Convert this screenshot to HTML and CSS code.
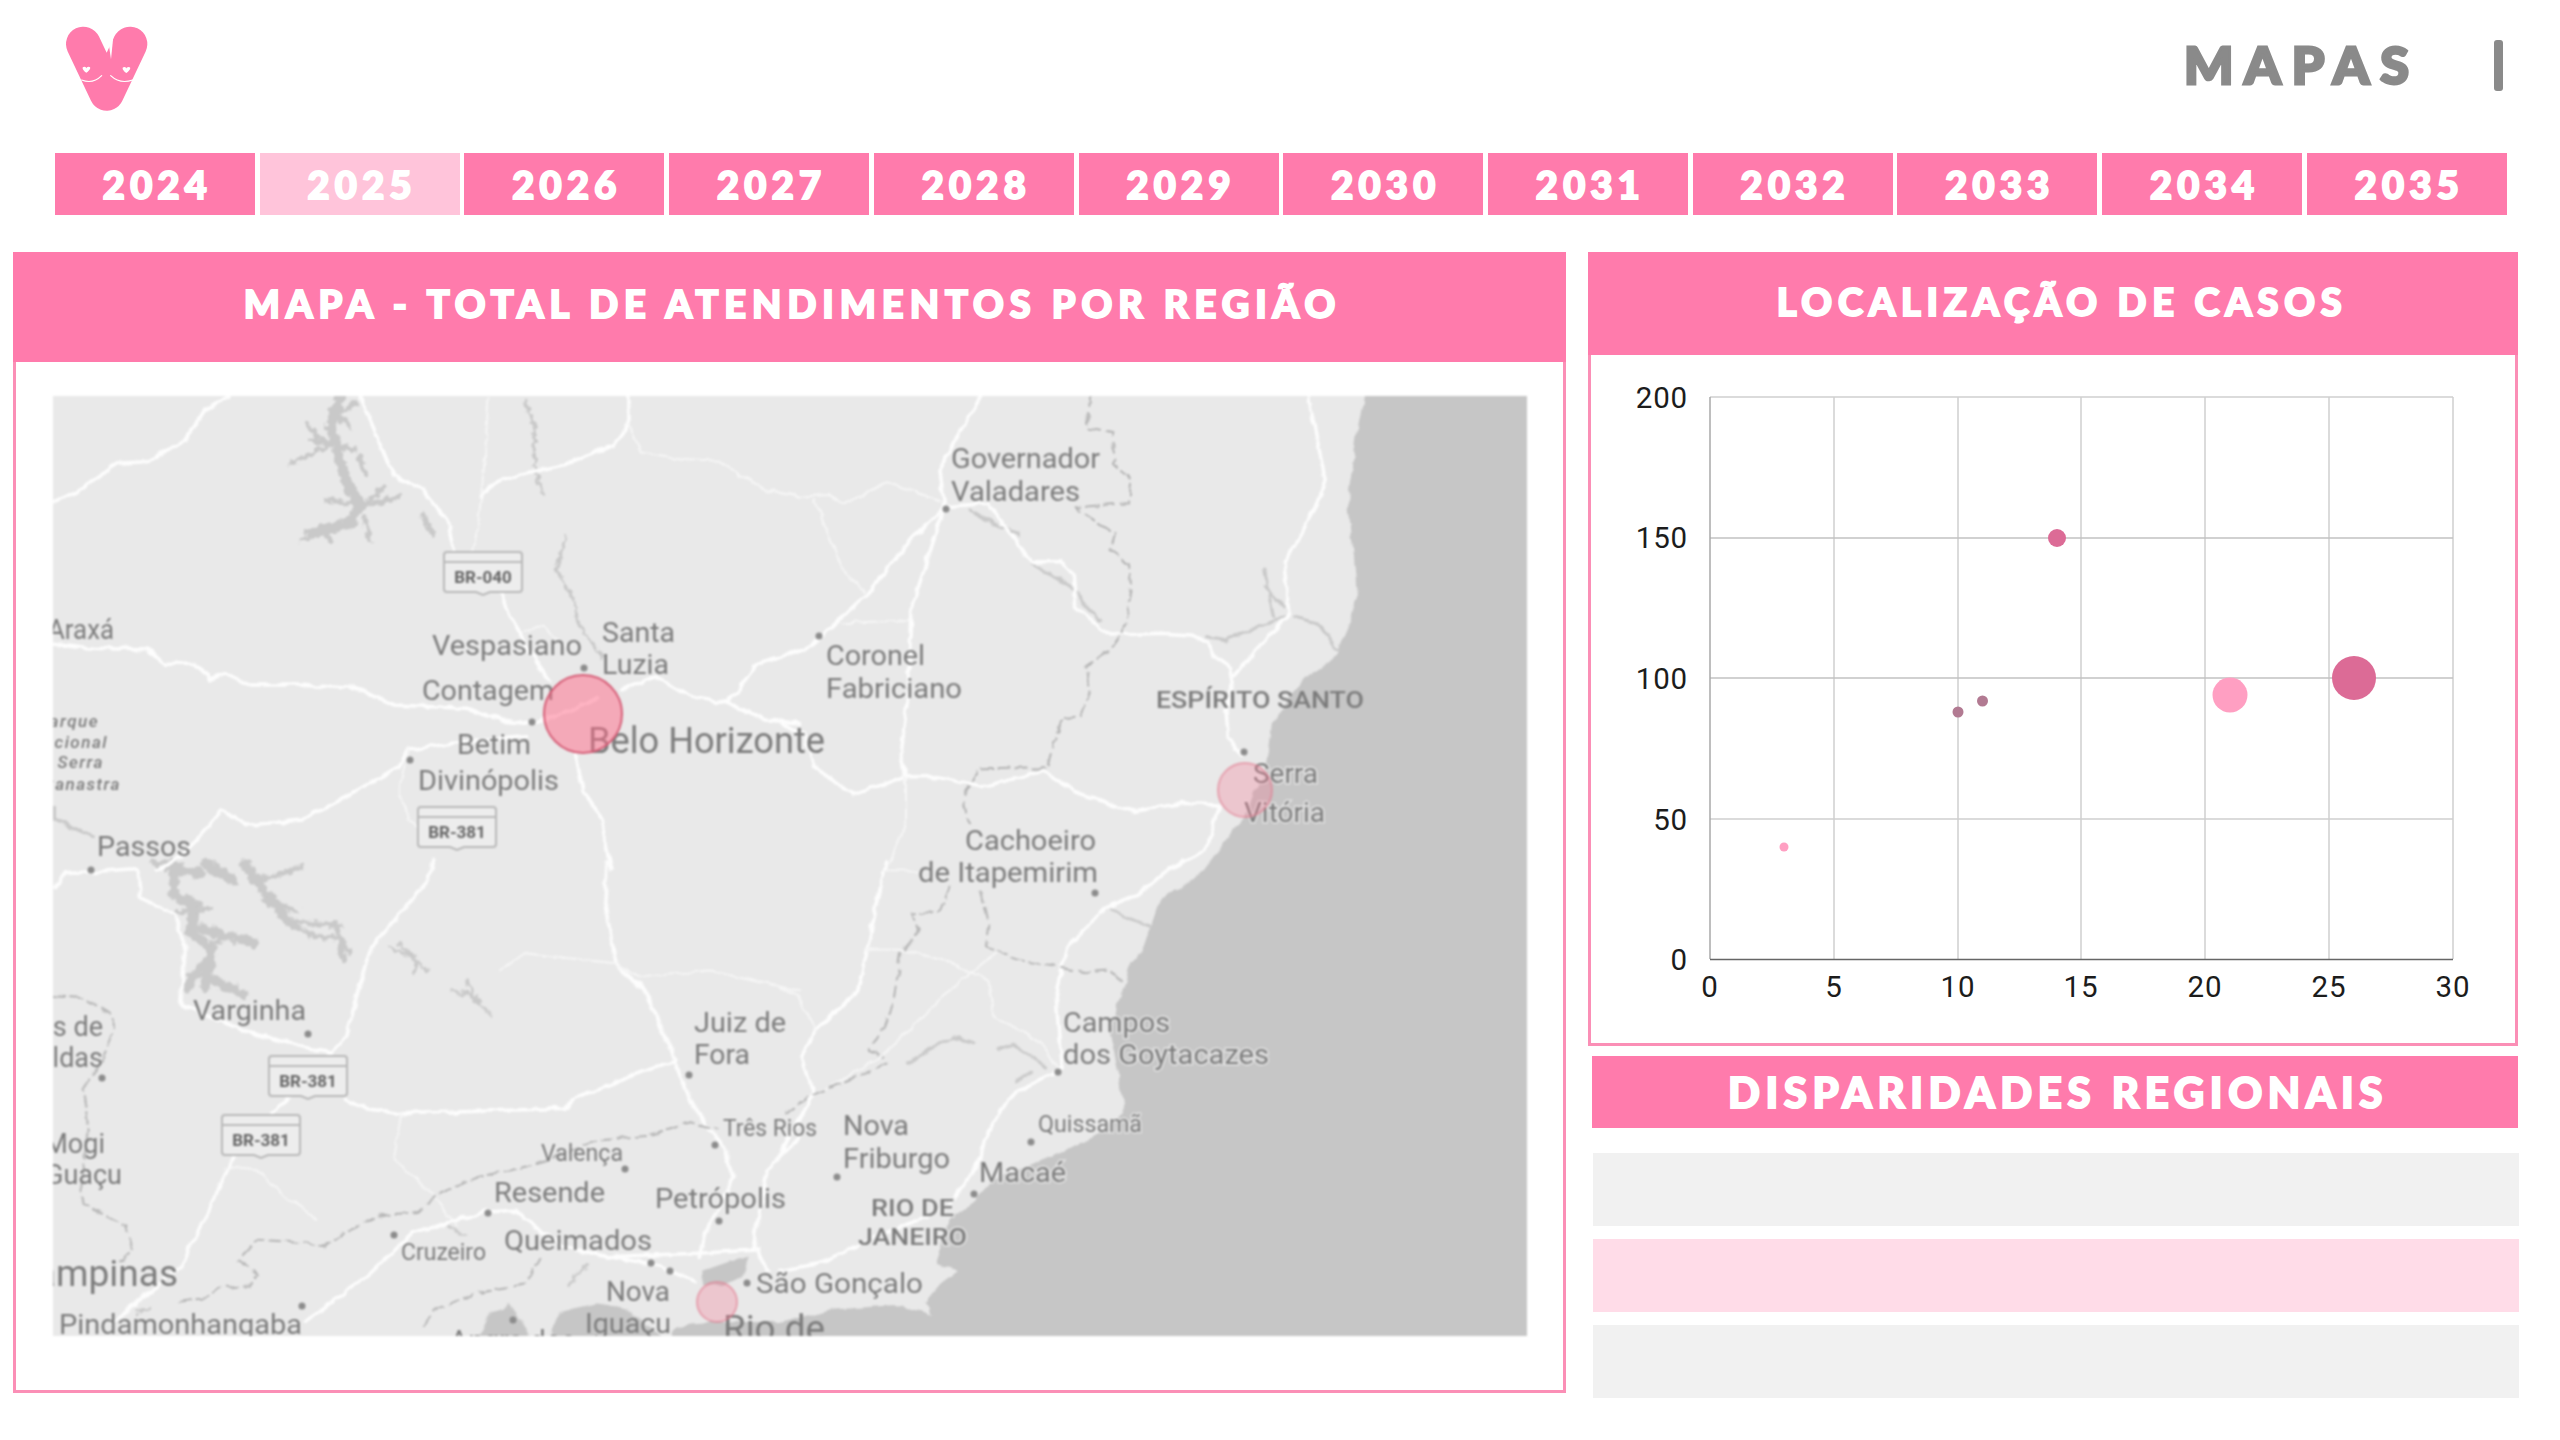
FILE: index.html
```html
<!DOCTYPE html>
<html lang="pt">
<head>
<meta charset="utf-8">
<title>Mapas</title>
<link rel="stylesheet" href="styles.css">
</head>
<body>
<header class="top">
  <svg class="logo" viewBox="0 0 390 330" width="130" height="110" aria-label="logo">
    <path class="logo-v" d="M130,102 L200,250 L270,102"/>
    <path class="logo-slit" d="M200,60 L213,148 L222,60Z"/>
    <path class="logo-heart" d="M139,188 C126,179 125,170 133,170 C137,170 139,173 139,175 C139,173 142,170 146,170 C154,170 152,179 139,188Z"/>
    <path class="logo-heart" d="M259,189 C246,180 245,171 253,171 C257,171 259,174 259,176 C259,174 262,171 266,171 C274,171 272,180 259,189Z"/>
    <path class="logo-smile" d="M125,210 C150,220 170,212 185,197"/>
    <path class="logo-smile" d="M212,197 C228,212 250,220 278,210"/>
  </svg>
  <h1 class="page-title">MAPAS</h1>
  <span class="title-bar"></span>
</header>

<nav class="tabs">
  <a class="tab">2024</a>
  <a class="tab tab-active">2025</a>
  <a class="tab">2026</a>
  <a class="tab">2027</a>
  <a class="tab">2028</a>
  <a class="tab">2029</a>
  <a class="tab">2030</a>
  <a class="tab">2031</a>
  <a class="tab">2032</a>
  <a class="tab">2033</a>
  <a class="tab">2034</a>
  <a class="tab">2035</a>
</nav>

<main class="content">
  <section class="panel panel-map">
    <h2 class="panel-head head-map">MAPA - TOTAL DE ATENDIMENTOS POR REGIÃO</h2>
    <div class="map-wrap">
      <svg class="map" viewBox="53 396 1474 940" width="1474" height="940">
        <defs>
          <filter id="rough" filterUnits="userSpaceOnUse" x="0" y="360" width="1600" height="1020" color-interpolation-filters="sRGB">
            <feTurbulence type="fractalNoise" baseFrequency=".075" numOctaves="2" seed="4" result="n"/>
            <feDisplacementMap in="SourceGraphic" in2="n" scale="7" xChannelSelector="R" yChannelSelector="G"/>
          </filter>
          <filter id="feather" filterUnits="userSpaceOnUse" x="0" y="360" width="1600" height="1020" color-interpolation-filters="sRGB">
            <feTurbulence type="fractalNoise" baseFrequency=".14" numOctaves="2" seed="9" result="n"/>
            <feDisplacementMap in="SourceGraphic" in2="n" scale="10" xChannelSelector="R" yChannelSelector="G"/>
          </filter>
        </defs>
        <rect class="land" x="53" y="396" width="1474" height="940"/>

        <g class="feathered">
          <g transform="translate(40,390) scale(.4847,.3333)">
            <path class="water wide" d="M620,20 L600,110 L620,220 L640,300 L660,340 L640,400 L560,430"/>
            <path class="water" d="M550,100 L590,170 L520,220 M650,40 L600,80 M560,150 L650,180 M660,200 L670,250 M590,330 L650,340 M740,320 L660,350 M710,290 L670,345 M670,380 L680,450 M540,450 L640,390 M600,60 L640,110 M580,410 L600,455 M790,375 L810,430"/>
            <path class="water thin" d="M1000,30 L1020,110 L1020,220 L1035,310 M1085,440 L1065,540 L1100,620 L1110,700 L1160,800"/>
          </g>
          <g transform="translate(40,860) scale(.4847,.345)">
            <path class="water wide" d="M275,10 L275,100 L320,130 L310,210 L355,260 L340,370 M420,10 L480,120 L520,190"/>
            <path class="water wide" d="M310,190 L440,240 M340,300 L300,370 M345,340 L420,390 M240,10 L330,40 M340,10 L400,60"/>
            <path class="water" d="M355,240 L400,220 M520,190 L570,220 M570,220 L620,230 L640,270 M450,60 L540,20 M460,110 L530,150 M285,150 L350,140 M510,180 L620,190 M610,180 L625,290"/>
            <path class="water thin" d="M720,250 L780,290 L770,330 M740,240 L800,320 M850,380 L890,390 L930,450 M880,350 L910,420 M840,1060 L880,1090 M1130,1170 L1090,1230 M200,1310 L230,1300"/>
          </g>
        </g>

        <g class="roughened">
          <path class="sea" d="M1368,380 L1364,396 L1357,433 L1349,490 L1348,503 L1354,557 L1357,597 L1347,630 L1337,653 L1328,665 L1311,673 L1294,690 L1279,713 L1270,733 L1267,757 L1265,777 L1255,790 L1245,817 L1231,833 L1204,870 L1197,874 L1182,888 L1168,893 L1158,905 L1151,926 L1146,943 L1129,967 L1124,988 L1117,1005 L1110,1032 L1117,1067 L1124,1112 L1100,1133 L1071,1148 L1032,1164 L993,1181 L974,1202 L950,1219 L938,1250 L938,1264 L957,1271 L940,1284 L925,1302 L933,1315 L896,1305 L828,1310 L780,1322 L719,1322 L675,1326 L660,1360 L1550,1360 L1550,380Z"/>

          <!-- traced on the top-left quarter -->
          <g transform="translate(40,390) scale(.4847,.3333)">
            <path class="road" d="M27,340 C60,320 90,300 110,270 L160,220 L220,215 L270,170 L300,150 L340,60 L390,18"/>
            <path class="road" d="M660,20 L690,120 L730,260 L790,300 L840,390 L855,490"/>
            <path class="road thin" d="M925,20 L918,200 L905,390 L890,490"/>
            <path class="road" d="M910,320 C930,280 960,260 1000,250 L1080,225 L1180,170 L1215,100 L1215,18"/>
            <path class="road" d="M950,610 L975,690 L1030,830 L1050,870"/>
            <path class="road" d="M27,760 L110,775 L220,780 L260,820 L320,820 L350,870 L380,850 L430,885 L530,885 L650,895 L730,945 L880,955 L950,990 L1020,1000 L1100,960 L1150,920"/>
            <path class="road" d="M760,1080 L850,1060 L1000,1040 M760,1080 L740,1130 L620,1230 L540,1290 L430,1305 L375,1260 L330,1340 L290,1400 L240,1440"/>
            <path class="road" d="M1105,1090 L1120,1200 L1160,1290 L1180,1440"/>
            <path class="road" d="M1200,900 L1270,860 L1340,920 L1420,940 L1480,820 L1568,780 M1420,940 L1500,990 L1568,1000"/>
            <path class="road thin" d="M1215,100 L1240,190 L1330,210 L1400,215 L1440,250 L1500,300 L1568,320"/>
            <path class="road thin" d="M760,1080 L740,1200 L760,1290 L820,1340 M1000,720 L1040,710 L1090,780"/>
            <path class="water thin" d="M30,1250 L30,1290 L110,1340"/>
          </g>

          <!-- traced on the top-right quarter -->
          <g transform="translate(780,390) scale(.4847,.3333)">
            <path class="water thin" d="M520,520 L600,590 L660,690 M880,740 L920,750 L1040,680 M1060,680 L1110,700 L1150,780 M1000,540 L1020,680 M1000,590 L1040,650 M390,360 L440,400 L490,430"/>
            <path class="road" d="M415,18 L370,130 L330,240 L340,350 L270,660 L265,900 L250,1090 L260,1160"/>
            <path class="road" d="M340,350 L270,450 L180,610 L100,720 L50,780 L0,800"/>
            <path class="road thin" d="M0,310 L40,320 L100,315 L130,340 L220,280 L330,330 M70,330 L130,540 L175,610 M130,700 L265,690"/>
            <path class="road" d="M340,350 L430,340 L500,480 L520,515 L580,515 L605,550 L610,650 L680,735 L790,730 L850,735 L885,760 L890,790 L930,830 L935,880 L920,960 L925,1040 L955,1100"/>
            <path class="road" d="M1090,18 L1125,270 L1110,340 L1040,520 L1050,670 L935,860"/>
            <path class="road" d="M0,1000 L50,1030 L70,1130 L150,1215 L260,1160 L330,1160 L420,1190 L540,1145 L620,1210 L730,1265 L830,1240 L905,1245 L880,1380 L800,1440"/>
            <path class="road thin" d="M260,1160 L260,1300 L220,1440"/>
            <path class="border" d="M640,18 L635,115 L690,130 L685,220 L725,270 L720,340 L660,345 L610,355 L690,430 L680,480 L720,520 L725,600 L710,720 L680,780 L630,830 L640,920 L620,980 L580,985 L550,1135 L410,1138 L380,1220 L390,1300"/>
          </g>

          <!-- traced on the bottom-left quarter -->
          <g transform="translate(40,860) scale(.4847,.345)">
            <path class="road" d="M30,80 L50,40 L200,25 L205,110 L280,160 L300,250 L290,420 L430,500 L540,540 L600,560 L630,510 L680,260 L800,60 L810,0"/>
            <path class="road" d="M600,560 L510,690 L480,730 M400,860 L290,1180 L200,1280 L150,1340"/>
            <path class="road" d="M630,690 L680,725 L750,735 L1080,720 L1120,680 L1290,590 L1310,580 L1250,380 L1190,310 L1165,130 L1170,0"/>
            <path class="road thin" d="M1190,310 L1240,340 L1380,320 L1568,380 M1000,270 L950,320 M1000,270 L1190,300 M380,890 L450,900 L510,980 L570,1040 M745,735 L730,870 L810,970 L860,1060"/>
            <path class="road" d="M1310,590 L1350,720 L1410,830 L1430,920 L1370,1090 L1360,1150"/>
            <path class="road" d="M545,1340 L680,1200 L770,1080 L920,1020 L980,1015 L1030,1070 L1080,1120 L1170,1150 L1360,1140 L1480,1130 L1500,1190 M1170,1150 L1260,1170 L1350,1220 M1568,800 L1500,900 L1470,1130"/>
            <path class="border" d="M27,395 L90,400 L150,450 L150,510 L130,570 L90,660 L100,760 L85,950 L90,1000 L180,1060 L190,1130 L160,1170"/>
            <path class="border" d="M290,1280 L340,1270 L380,1230 L430,1240 L450,1200 L410,1160 L450,1100 L540,1110 L590,1120 L640,1070 L700,1030 L780,1020 L820,970 L900,920 L1030,880 L1150,810 L1250,800 L1340,760 L1400,780"/>
            <path class="border" d="M790,1350 L820,1300 L910,1250 L1000,1230 L1030,1150"/>
            <path class="sea" d="M1370,1190 L1420,1165 L1462,1150 L1450,1210 L1400,1235 L1365,1225Z M900,1400 L930,1310 L970,1290 L1020,1400Z M1050,1400 L1070,1310 L1150,1285 L1210,1300 L1300,1400Z"/>
          </g>

          <!-- traced on the bottom-right quarter -->
          <g transform="translate(780,860) scale(.4847,.345)">
            <path class="water thin" d="M680,140 L720,170 L765,190 M265,590 L310,550 L360,515 L400,530 M450,550 L480,535 L550,600 M490,640 L515,615"/>
            <path class="road" d="M220,0 L180,260 L160,380 L75,490 L45,570 L70,680 L15,810 L0,860"/>
            <path class="road" d="M830,0 L790,40 L740,100 L670,140 L590,260 L570,400 L580,600 L470,690 L430,790 L400,900 L350,1000 L170,1110 L80,1170 L0,1190"/>
            <path class="road thin" d="M180,260 L250,260 L350,295 L430,350 L440,450 L540,530 L570,600 M445,270 L330,400 L220,560 L75,680 M0,370 L35,390 L75,490 M215,30 L285,30"/>
            <path class="border" d="M350,80 L330,150 L270,155 L285,210 L250,270 L235,400 L215,480 L185,550 L215,570 M415,90 L430,180 L425,250 L490,290 L570,310 L630,325 L680,320 L710,360 M220,590 L70,680 L0,740"/>
          </g>
        </g>

        <g class="dots">
          <circle cx="584" cy="668" r="3.5"/><circle cx="532" cy="722" r="3.5"/><circle cx="410" cy="760" r="3.5"/>
          <circle cx="946" cy="509" r="3.5"/><circle cx="819" cy="636" r="3.5"/><circle cx="1244" cy="752" r="3.5"/>
          <circle cx="91" cy="870" r="3.5"/><circle cx="308" cy="1034" r="3.5"/><circle cx="102" cy="1078" r="3.5"/>
          <circle cx="689" cy="1075" r="3.5"/><circle cx="715" cy="1145" r="3.5"/><circle cx="625" cy="1169" r="3.5"/>
          <circle cx="394" cy="1235" r="3.5"/><circle cx="488" cy="1213" r="3.5"/><circle cx="719" cy="1221" r="3.5"/>
          <circle cx="651" cy="1263" r="3.5"/><circle cx="670" cy="1271" r="3.5"/><circle cx="747" cy="1283" r="3.5"/>
          <circle cx="302" cy="1306" r="3.5"/><circle cx="513" cy="1320" r="3.5"/>
          <circle cx="1095" cy="893" r="3.5"/><circle cx="1058" cy="1072" r="3.5"/><circle cx="1031" cy="1142" r="3.5"/>
          <circle cx="837" cy="1177" r="3.5"/><circle cx="974" cy="1194" r="3.5"/>
        </g>

        <g class="shield" transform="translate(444,552)"><path d="M3,0 H75 Q78,0 78,3 V37 Q78,40 75,40 H46 L39,43 L32,40 H3 Q0,40 0,37 V3 Q0,0 3,0Z M0,10 H78"/><text x="39" y="31">BR-040</text></g>
        <g class="shield" transform="translate(418,807)"><path d="M3,0 H75 Q78,0 78,3 V37 Q78,40 75,40 H46 L39,43 L32,40 H3 Q0,40 0,37 V3 Q0,0 3,0Z M0,10 H78"/><text x="39" y="31">BR-381</text></g>
        <g class="shield" transform="translate(269,1056)"><path d="M3,0 H75 Q78,0 78,3 V37 Q78,40 75,40 H46 L39,43 L32,40 H3 Q0,40 0,37 V3 Q0,0 3,0Z M0,10 H78"/><text x="39" y="31">BR-381</text></g>
        <g class="shield" transform="translate(222,1115)"><path d="M3,0 H75 Q78,0 78,3 V37 Q78,40 75,40 H46 L39,43 L32,40 H3 Q0,40 0,37 V3 Q0,0 3,0Z M0,10 H78"/><text x="39" y="31">BR-381</text></g>

        <g class="labels">
          <text x="48" y="639" textLength="66" lengthAdjust="spacingAndGlyphs">Araxá</text>
          <text x="432" y="655" textLength="150" lengthAdjust="spacingAndGlyphs">Vespasiano</text>
          <text x="602" y="642" textLength="73" lengthAdjust="spacingAndGlyphs">Santa</text>
          <text x="602" y="674" textLength="67" lengthAdjust="spacingAndGlyphs">Luzia</text>
          <text x="422" y="700" textLength="132" lengthAdjust="spacingAndGlyphs">Contagem</text>
          <text x="457" y="754" textLength="74" lengthAdjust="spacingAndGlyphs">Betim</text>
          <text x="418" y="790" textLength="141" lengthAdjust="spacingAndGlyphs">Divinópolis</text>
          <text x="97" y="856" textLength="94" lengthAdjust="spacingAndGlyphs">Passos</text>
          <text x="951" y="468" textLength="149" lengthAdjust="spacingAndGlyphs">Governador</text>
          <text x="951" y="501" textLength="129" lengthAdjust="spacingAndGlyphs">Valadares</text>
          <text x="826" y="665" textLength="99" lengthAdjust="spacingAndGlyphs">Coronel</text>
          <text x="826" y="698" textLength="136" lengthAdjust="spacingAndGlyphs">Fabriciano</text>
          <text class="state" x="1156" y="708" textLength="208" lengthAdjust="spacingAndGlyphs">ESPÍRITO SANTO</text>
          <text x="965" y="850" textLength="131" lengthAdjust="spacingAndGlyphs">Cachoeiro</text>
          <text x="918" y="882" textLength="180" lengthAdjust="spacingAndGlyphs">de Itapemirim</text>
          <text x="193" y="1020" textLength="113" lengthAdjust="spacingAndGlyphs">Varginha</text>
          <text class="end" x="103" y="1036">Poços de</text>
          <text class="end" x="103" y="1067">Caldas</text>
          <text class="end" x="105" y="1153">Mogi</text>
          <text class="end" x="122" y="1184">Guaçu</text>
          <text x="694" y="1032" textLength="92" lengthAdjust="spacingAndGlyphs">Juiz de</text>
          <text x="694" y="1064" textLength="56" lengthAdjust="spacingAndGlyphs">Fora</text>
          <text class="small" x="723" y="1136" textLength="94" lengthAdjust="spacingAndGlyphs">Três Rios</text>
          <text class="small" x="541" y="1161" textLength="82" lengthAdjust="spacingAndGlyphs">Valença</text>
          <text x="494" y="1202" textLength="111" lengthAdjust="spacingAndGlyphs">Resende</text>
          <text x="655" y="1208" textLength="131" lengthAdjust="spacingAndGlyphs">Petrópolis</text>
          <text class="small" x="401" y="1260" textLength="85" lengthAdjust="spacingAndGlyphs">Cruzeiro</text>
          <text x="504" y="1250" textLength="148" lengthAdjust="spacingAndGlyphs">Queimados</text>
          <text x="843" y="1135" textLength="66" lengthAdjust="spacingAndGlyphs">Nova</text>
          <text x="843" y="1168" textLength="107" lengthAdjust="spacingAndGlyphs">Friburgo</text>
          <text x="606" y="1301" textLength="64" lengthAdjust="spacingAndGlyphs">Nova</text>
          <text x="585" y="1333" textLength="86" lengthAdjust="spacingAndGlyphs">Iguaçu</text>
          <text x="59" y="1334" textLength="243" lengthAdjust="spacingAndGlyphs">Pindamonhangaba</text>
          <text x="450" y="1350" textLength="126" lengthAdjust="spacingAndGlyphs">Angra dos</text>
          <text class="end big" x="178" y="1286">Campinas</text>
          <text class="big" x="588" y="753" textLength="237" lengthAdjust="spacingAndGlyphs">Belo Horizonte</text>
          <text class="big" x="723" y="1341" textLength="102" lengthAdjust="spacingAndGlyphs">Rio de</text>
          <g class="italic">
            <text class="end" x="99" y="727">Parque</text>
            <text class="end" x="108" y="748">Nacional</text>
            <text class="end" x="104" y="768">Serra</text>
            <text class="end" x="121" y="790">Canastra</text>
          </g>
        </g>
        <g class="labels halo">
          <text x="1253" y="783" textLength="65" lengthAdjust="spacingAndGlyphs">Serra</text>
          <text x="1244" y="822" textLength="81" lengthAdjust="spacingAndGlyphs">Vitória</text>
          <text x="1063" y="1032" textLength="107" lengthAdjust="spacingAndGlyphs">Campos</text>
          <text x="1063" y="1064" textLength="206" lengthAdjust="spacingAndGlyphs">dos Goytacazes</text>
          <text class="small" x="1038" y="1132" textLength="104" lengthAdjust="spacingAndGlyphs">Quissamã</text>
          <text x="979" y="1182" textLength="87" lengthAdjust="spacingAndGlyphs">Macaé</text>
          <text class="state" x="871" y="1216" textLength="83" lengthAdjust="spacingAndGlyphs">RIO DE</text>
          <text class="state" x="858" y="1245" textLength="109" lengthAdjust="spacingAndGlyphs">JANEIRO</text>
          <text x="756" y="1293" textLength="167" lengthAdjust="spacingAndGlyphs">São Gonçalo</text>
        </g>

        <circle class="hit hit-strong" cx="583" cy="714" r="39"/>
        <circle class="hit hit-soft" cx="1245" cy="790" r="27"/>
        <circle class="hit hit-soft" cx="717" cy="1302" r="20"/>
      </svg>
    </div>
  </section>

  <div class="side">
    <section class="panel panel-chart">
      <h2 class="panel-head head-chart">LOCALIZAÇÃO DE CASOS</h2>
      <svg class="chart" viewBox="1591 355 924 688" width="924" height="688">
        <path class="grid" d="M1834,397 V959 M1958,397 V959 M2081,397 V959 M2205,397 V959 M2329,397 V959 M2453,397 V959"/>
        <path class="grid" d="M1710,397 H2453 M1710,819 H2453"/>
        <path class="grid grid-strong" d="M1710,538 H2453 M1710,678 H2453"/>
        <path class="axis-y" d="M1710,397 V959"/>
        <path class="axis-x" d="M1710,959.5 H2453"/>
        <g class="tick-y">
          <text x="1688" y="408">200</text>
          <text x="1688" y="548">150</text>
          <text x="1688" y="689">100</text>
          <text x="1688" y="830">50</text>
          <text x="1688" y="970">0</text>
        </g>
        <g class="tick-x">
          <text x="1710" y="997">0</text>
          <text x="1834" y="997">5</text>
          <text x="1958" y="997">10</text>
          <text x="2081" y="997">15</text>
          <text x="2205" y="997">20</text>
          <text x="2329" y="997">25</text>
          <text x="2453" y="997">30</text>
        </g>
        <circle class="pt pt-light" cx="1784" cy="847" r="4.5"/>
        <circle class="pt pt-mauve" cx="1958" cy="712" r="5.5"/>
        <circle class="pt pt-mauve" cx="1982.5" cy="701" r="5.5"/>
        <circle class="pt pt-deep" cx="2057" cy="538" r="9"/>
        <circle class="pt pt-light" cx="2230" cy="695" r="17.5"/>
        <circle class="pt pt-deep" cx="2354" cy="678" r="22"/>
      </svg>
    </section>
    <h2 class="panel-head head-disp">DISPARIDADES REGIONAIS</h2>
    <div class="rows">
      <div class="row row-grey"></div>
      <div class="row row-pink"></div>
      <div class="row row-grey"></div>
    </div>
  </div>
</main>
</body>
</html>
```

FILE: styles.css
```css
* { box-sizing: border-box; }
html, body { margin: 0; padding: 0; }
body {
  width: 2560px;
  height: 1440px;
  background: #fff;
  overflow: hidden;
  font-family: "Lato", "Open Sans", sans-serif;
}

/* top bar */
.top {
  height: 153px;
  display: flex;
  align-items: flex-start;
  padding-left: 40px;
  padding-top: 10px;
}
.logo { flex: none; display: block; }
.logo-v { fill: none; stroke: #ff7bac; stroke-width: 104; stroke-linecap: round; stroke-linejoin: round; }
.logo-slit { fill: #fff; }
.logo-heart { fill: #fff; }
.logo-smile { fill: none; stroke: #fff; stroke-width: 3.5; stroke-linecap: round; }
.page-title {
  margin: 24px 0 0 auto;
  font-size: 52px;
  line-height: 60px;
  font-weight: 900;
  letter-spacing: 11px;
  color: #8a8a8a;
  -webkit-text-stroke: 3px #8a8a8a;
}
.title-bar {
  width: 9px;
  height: 51px;
  margin: 30px 57px 0 74px;
  background: #8a8a8a;
  border-radius: 3px;
}

/* year tabs */
.tabs {
  display: flex;
  justify-content: space-between;
  width: 2452px;
  height: 62px;
  margin-left: 55px;
}
.tab {
  width: 200px;
  padding-left: 5px;
  background: #ff7bac;
  color: #fff;
  font-size: 38px;
  font-weight: 900;
  letter-spacing: 5.3px;
  line-height: 62px;
  text-align: center;
  -webkit-text-stroke: 2px #fff;
}
.tab-active { background: #ffc4da; }

/* main area */
.content {
  display: flex;
  align-items: flex-start;
  margin: 37px 0 0 13px;
}
.panel {
  border: 3px solid #fb8fb6;
  display: flex;
  flex-direction: column;
  background: #fff;
}
.panel-head {
  margin: 0;
  background: #ff7bac;
  color: #fff;
  font-weight: 900;
  text-align: center;
  flex: none;
  -webkit-text-stroke: 2px #fff;
}
.panel-map { width: 1553px; height: 1141px; }
.head-map {
  height: 110px;
  margin: -3px -3px 0;
  padding-left: 6px;
  font-size: 38px;
  line-height: 103px;
  letter-spacing: 5.95px;
}
.map-wrap { padding: 34px 0 0 37px; }
.map { display: block; filter: blur(.9px); }

.land { fill: #e9e9e9; }
.sea { fill: #c6c6c6; }
.road, .water, .border {
  fill: none;
  stroke-linejoin: round;
  stroke-linecap: round;
  vector-effect: non-scaling-stroke;
}
.feathered { filter: url(#feather); }
.roughened { filter: url(#rough); }
.road { stroke: #fdfdfd; stroke-width: 3.5; }
.road.thin { stroke-width: 2; stroke: #f6f6f6; }
.water { stroke: #c9c9c9; stroke-width: 5; }
.water.thin { stroke-width: 3; }
.water.wide { stroke-width: 10; }
.border { stroke: #b4b4b4; stroke-width: 2; stroke-dasharray: 11 6; }
.dots circle { fill: #8c8c8c; }

.labels text {
  font-family: "Roboto", sans-serif;
  font-size: 27px;
  fill: #7c7c7c;
}
.labels .small { font-size: 23px; }
.labels .big { font-size: 37px; }
.labels .state { font-size: 24px; font-weight: 500; }
.labels .end { text-anchor: end; }
.labels .italic text { font-size: 17px; font-style: italic; letter-spacing: 1.5px; font-weight: 500; }
.halo text { paint-order: stroke; stroke: rgba(235,235,235,.75); stroke-width: 3px; }

.shield path { fill: #ededed; stroke: #b9b9b9; stroke-width: 2; }
.shield text {
  font-family: "Roboto", sans-serif;
  font-size: 17px;
  font-weight: 700;
  fill: #666;
  text-anchor: middle;
}

.hit { stroke-width: 2; }
.hit-strong { fill: rgba(255, 105, 135, .5); stroke: #d65f78; }
.hit-soft { fill: rgba(245, 120, 145, .3); stroke: rgba(225, 125, 145, .6); }

/* right column */
.side { width: 934px; margin-left: 22px; }
.panel-chart { width: 930px; height: 794px; }
.head-chart {
  height: 103px;
  margin: -3px -3px 0;
  font-size: 38px;
  line-height: 98px;
  letter-spacing: 5.7px;
  padding-left: 18px;
}
.chart { display: block; }
.grid { fill: none; stroke: #cfcfcf; stroke-width: 1.5; }
.grid-strong { stroke: #c2c2c2; }
.axis-y { fill: none; stroke: #a8a8a8; stroke-width: 1.5; }
.axis-x { fill: none; stroke: #666; stroke-width: 1.5; }
.tick-y text, .tick-x text {
  font-family: "Roboto", sans-serif;
  font-size: 29.5px;
  letter-spacing: .8px;
  fill: #1c1c1c;
}
.tick-y text { text-anchor: end; }
.tick-x text { text-anchor: middle; }
.pt-light { fill: #ff9fc2; }
.pt-mauve { fill: #b27a92; }
.pt-deep { fill: #dc6b96; }

.head-disp {
  width: 926px;
  height: 72px;
  margin: 10px 0 0 4px;
  padding-left: 6px;
  font-size: 42px;
  line-height: 72px;
  letter-spacing: 5.6px;
}
.rows {
  display: flex;
  flex-direction: column;
  gap: 13.5px;
  margin: 25px 0 0 5px;
}
.row { width: 926px; height: 72.5px; }
.row-grey { background: #f1f1f1; }
.row-pink { background: #ffdce8; }
```
